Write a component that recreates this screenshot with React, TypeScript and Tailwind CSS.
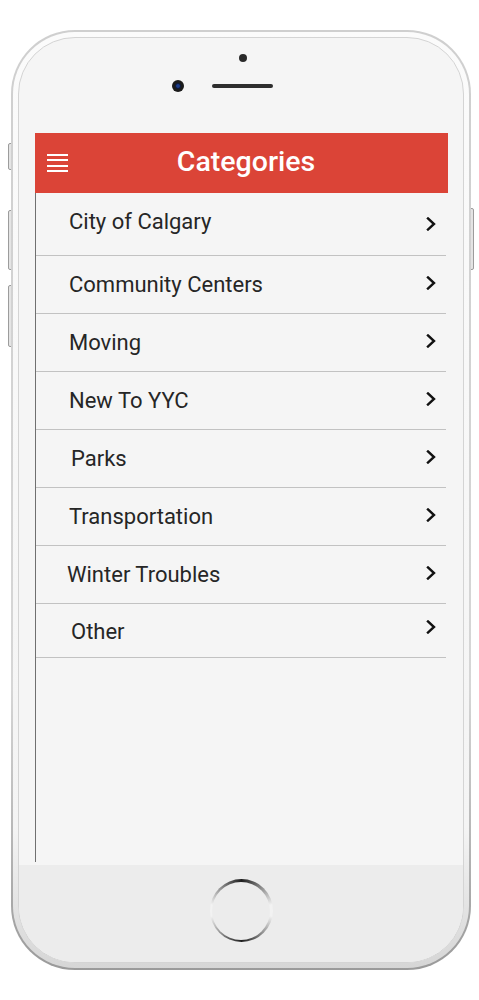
const items = [
  { label: "City of Calgary", row: "h-[63px]", pad: "pl-[33px]", text: "-translate-y-[2px]", chev: "translate-y-[0px]" },
  { label: "Community Centers", row: "h-[58px]", pad: "pl-[33px]", text: "translate-y-[0px]", chev: "-translate-y-[2px]" },
  { label: "Moving", row: "h-[58px]", pad: "pl-[33px]", text: "translate-y-[0px]", chev: "-translate-y-[2px]" },
  { label: "New To YYC", row: "h-[58px]", pad: "pl-[33px]", text: "translate-y-[0px]", chev: "-translate-y-[2px]" },
  { label: "Parks", row: "h-[58px]", pad: "pl-[35px]", text: "translate-y-[0px]", chev: "-translate-y-[2px]" },
  { label: "Transportation", row: "h-[58px]", pad: "pl-[33px]", text: "translate-y-[0px]", chev: "-translate-y-[2px]" },
  { label: "Winter Troubles", row: "h-[58px]", pad: "pl-[31px]", text: "translate-y-[0px]", chev: "-translate-y-[2px]" },
  { label: "Other", row: "h-[54px]", pad: "pl-[35px]", text: "translate-y-[1px]", chev: "-translate-y-[4px]" },
];

function Chevron({ className }: { className?: string }) {
  return (
    <svg width="10" height="14" viewBox="0 0 10 14" className={className}>
      <path d="M2 1.5 L8 7 L2 12.5" fill="none" stroke="#111" strokeWidth="2.4" strokeLinecap="square" />
    </svg>
  );
}

export default function App() {
  return (
    <div className="relative w-[479px] h-[1000px] bg-white pt-[30px] pl-[11px] font-['Roboto',sans-serif]">
      {/* side buttons */}
      <div className="absolute left-[8px] top-[143px] w-[4px] h-[27px] rounded-l-[2px] border border-[#9c9c9c] bg-[#e4e4e4]" />
      <div className="absolute left-[8px] top-[210px] w-[4px] h-[60px] rounded-l-[2px] border border-[#9c9c9c] bg-[#e4e4e4]" />
      <div className="absolute left-[8px] top-[285px] w-[4px] h-[62px] rounded-l-[2px] border border-[#9c9c9c] bg-[#e4e4e4]" />
      <div className="absolute left-[470px] top-[208px] w-[4px] h-[62px] rounded-r-[2px] border border-[#9c9c9c] bg-[#e4e4e4]" />

      {/* phone body */}
      <div className="relative w-[460px] h-[940px] rounded-[64px] p-[2px] bg-[linear-gradient(to_bottom,#cfcfcf,#d6d6d6_70%,#9a9a9a)]">
        <div className="w-full h-full rounded-[62px] p-[5px] bg-[linear-gradient(to_bottom,#fbfbfb,#f4f4f4_85%,#d6d6d6)]">
          <div className="w-full h-full rounded-[57px] border border-[#d4d4d4] bg-[#f5f5f5] overflow-hidden flex flex-col">
            {/* top bezel */}
            <div className="h-[95px] flex flex-col items-center pt-[16px]">
              <div className="ml-[4px] w-[8px] h-[8px] rounded-full bg-[#2a2a2a]" />
              <div className="ml-[2px] mt-[18px] flex items-center w-[141px]">
                <div className="w-[12px] h-[12px] rounded-full bg-[#1b1b1b] flex items-center justify-center">
                  <div className="w-[6px] h-[6px] rounded-full bg-[#1d3d8a] border border-[#0d1a3a]" />
                </div>
                <div className="ml-[28px] w-[61px] h-[4px] rounded-full bg-[#2e2e2e]" />
              </div>
            </div>

            {/* screen */}
            <div className="ml-[16px] mr-[15px] h-[732px] bg-[#f5f5f5] flex flex-col">
              <div className="h-[60px] bg-[#db4437] flex items-center">
                <div className="pl-[12px] flex flex-col gap-[3.4px] w-[33px]">
                  <div className="h-[2px] bg-white" />
                  <div className="h-[2px] bg-white" />
                  <div className="h-[2px] bg-white" />
                  <div className="h-[2px] bg-white" />
                </div>
                <div className="flex-1 pr-[24px] text-center text-white text-[28.5px] font-medium leading-none -translate-y-[1px]">
                  Categories
                </div>
              </div>
              <div className="flex-1 border-l border-[#707070] mb-[3px]">
                {items.map((it) => (
                  <div
                    key={it.label}
                    className={`${it.row} ${it.pad} mr-[2px] border-b-[1.5px] border-[#c2c2c2] flex items-center justify-between pr-[10px]`}
                  >
                    <span className={`${it.text} text-[22px] text-[#262626] leading-none`}>{it.label}</span>
                    <Chevron className={it.chev} />
                  </div>
                ))}
              </div>
            </div>

            {/* bottom bezel */}
            <div className="flex-1 bg-[#ececec] flex justify-center pt-[14px]">
              <div className="w-[63px] h-[63px] rounded-full p-[2.5px] bg-[conic-gradient(#1e1e1e,#f2f2f2_22%,#f2f2f2_28%,#1e1e1e_50%,#f2f2f2_72%,#f2f2f2_78%,#1e1e1e)]">
                <div className="w-full h-full rounded-full bg-[#ececec]" />
              </div>
            </div>
          </div>
        </div>
      </div>
    </div>
  );
}
